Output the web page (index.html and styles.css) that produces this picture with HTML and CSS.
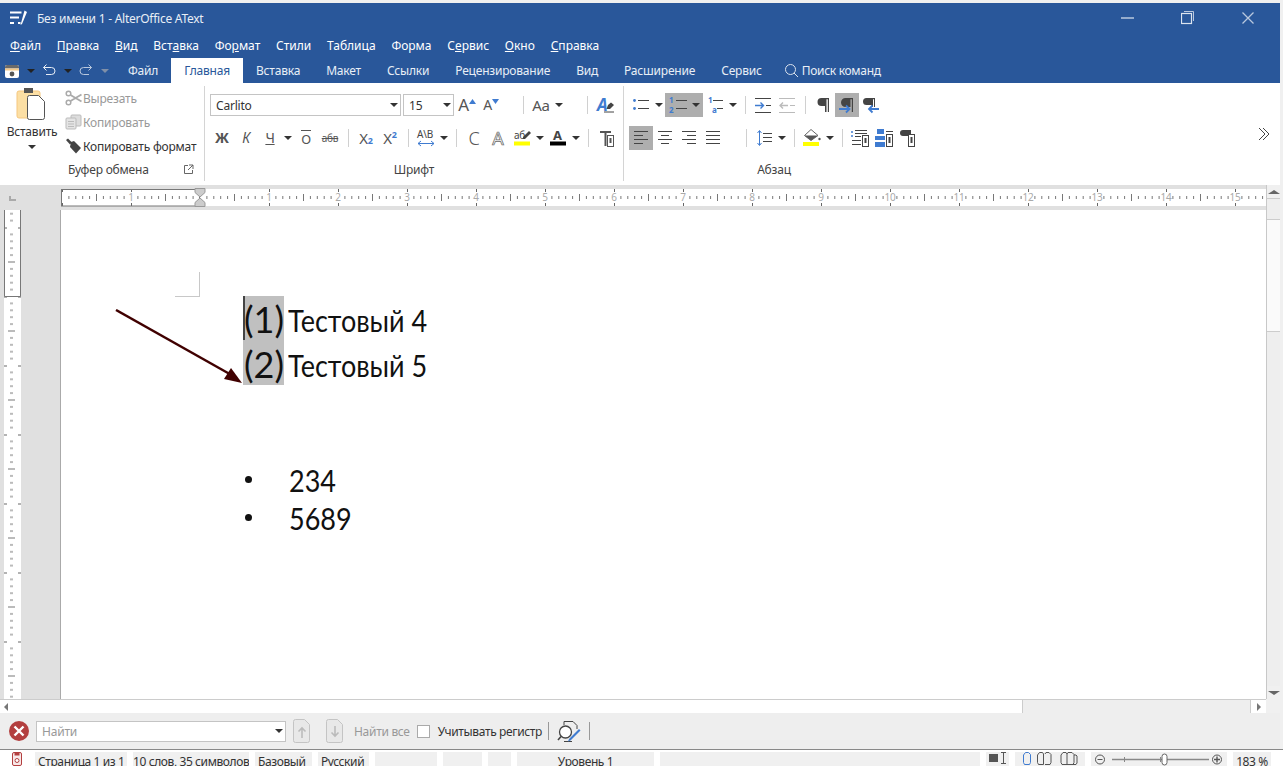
FILE: index.html
```html
<!DOCTYPE html>
<html lang="ru">
	<head>
		<meta charset="UTF-8" />
		<title>Без имени 1 - AlterOffice AText</title>
		<link rel="stylesheet" href="styles.css">
	</head>
	<body>
		<svg class="defs" width="0" height="0">
			<symbol id="i-bullets" viewBox="0 0 24 24"><g fill="#3f7bd0"><circle cx="5.500" cy="7.500" r="1.400"/><circle cx="5.500" cy="15.500" r="1.400"/></g><path d="M9 7.500h11M9 15.500h11" stroke="#444"/></symbol>
			<symbol id="i-indent" viewBox="0 0 24 24"><path d="M4 5.500h16M4 19.500h16M15 12.500h5" stroke="#444"/><path d="M4 12.500h8M9.500 9.500l3 3-3 3" stroke="#3f7bd0" stroke-width="1.400" fill="none"/></symbol>
			<symbol id="i-outdent" viewBox="0 0 24 24"><path d="M4 5.500h16M4 19.500h16M15 12.500h5" stroke="#bbb"/><path d="M13 12.500H5M8 9.500l-3 3 3 3" stroke="#bbb" stroke-width="1.400" fill="none"/></symbol>
			<symbol id="i-para" viewBox="0 0 24 24"><path d="M10.500 5H18v14h-1.200V6.200h-1.300V19H14v-6h-3.500a4 4 0 0 1 0-8z" fill="#444"/></symbol>
			<symbol id="i-para-ltr" viewBox="0 0 24 24"><path d="M10.500 5H18v14h-1.200V6.200h-1.300V14H10.500a4.500 4.500 0 0 1 0-9z" fill="#444"/><path d="M4 16h10M11 12.500l3.500 3.500-3.500 3.500" stroke="#3f7bd0" stroke-width="1.800" fill="none"/></symbol>
			<symbol id="i-para-rtl" viewBox="0 0 24 24"><path d="M7.500 5H16v9h-1V6.200h-1V14h-1.500v-2H7.500a3.500 3.500 0 0 1 0-7z" fill="#444"/><path d="M10 16h10M13.500 12.500L10 16l3.500 3.500" stroke="#3f7bd0" stroke-width="1.800" fill="none"/></symbol>
			<symbol id="i-left" viewBox="0 0 24 24"><path d="M5 5.500h14M5 9.500h9M5 13.500h14M5 17.500h9" stroke="#444"/></symbol>
			<symbol id="i-center" viewBox="0 0 24 24"><path d="M5 5.500h14M8 9.500h8M5 13.500h14M8 17.500h8" stroke="#444"/></symbol>
			<symbol id="i-right" viewBox="0 0 24 24"><path d="M5 5.500h14M10 9.500h9M5 13.500h14M10 17.500h9" stroke="#444"/></symbol>
			<symbol id="i-justify" viewBox="0 0 24 24"><path d="M5 5.500h14M5 9.500h14M5 13.500h14M5 17.500h14" stroke="#444"/></symbol>
			<symbol id="i-spacing" viewBox="0 0 24 24"><path d="M7.500 5v14M5.500 7l2-2.500 2 2.500M5.500 17l2 2.500 2-2.500" stroke="#3f7bd0" fill="none"/><path d="M11 7.500h9M11 11.500h9M11 15.500h9" stroke="#444"/></symbol>
			<symbol id="i-fill" viewBox="0 0 24 24"><path d="M11 3.500l7 6-7 5-6.500-5z" fill="#fff" stroke="#666"/><path d="M4.500 9.500H18l-7 5z" fill="#555"/><circle cx="19.500" cy="13" r="1.200" fill="#555"/><rect x="3" y="16" width="16" height="4" fill="#ffff00"/></symbol>
			<symbol id="i-list-page" viewBox="0 0 24 24"><g fill="#3f7bd0"><circle cx="4" cy="6" r="1"/><circle cx="4" cy="10" r="1"/></g><path d="M7 4.500h12M7 7.500h12M7 10.500h6M4 14.500h9M4 18.500h9" stroke="#444"/><rect x="14.500" y="9.500" width="6" height="11" fill="#fff" stroke="#444"/><rect x="16.500" y="12" width="2" height="5" fill="#444"/></symbol>
			<symbol id="i-block-page" viewBox="0 0 24 24"><g fill="#3f7bd0"><rect x="5" y="3" width="7" height="5"/><rect x="3" y="10" width="10" height="4"/><rect x="3" y="16" width="10" height="5"/></g><path d="M14 5.500h7" stroke="#444"/><rect x="14.500" y="8.500" width="6" height="12" fill="#fff" stroke="#444"/><rect x="16.500" y="11" width="2" height="6" fill="#444"/></symbol>
			<symbol id="i-para-page" viewBox="0 0 24 24"><path d="M7 4h8v7h-1v-1H7a3 3 0 0 1 0-6z" fill="#444"/><rect x="12.500" y="8.500" width="6" height="12" fill="#fff" stroke="#444"/><rect x="14.500" y="11" width="2" height="6" fill="#444"/></symbol>
			<symbol id="i-t-page" viewBox="0 0 24 24"><path d="M6 5h11v2h-4.500v13h-2V7H6z" fill="#555"/><rect x="13.500" y="9.500" width="6" height="11" fill="#fff" stroke="#555"/><rect x="15.500" y="12" width="2" height="5" fill="#555"/></symbol>
			<symbol id="i-doc" viewBox="0 0 18 26"><path d="M2.500 1.500h9l5 5v16a2 2 0 0 1-2 2h-12a2 2 0 0 1-2-2v-19a2 2 0 0 1 2-2z" fill="#e8e8e8" stroke="#c4c4c4"/></symbol>
		</svg>

		<div class="app">
			<header class="head">
				<div class="titlebar">
					<svg class="logo" width="18" height="18" viewBox="0 0 18 18"><path d="M0 3.500h11.500M0 8.500h9M0 14h4M8 14h2.500" stroke="#fff" stroke-width="2.200"/><path d="M14.500 1.500L17 3l-5 12-1.500 1z" fill="#fff"/></svg>
					<div class="title">Без имени 1 - AlterOffice AText</div>
					<div class="winbtns">
						<svg width="60" height="14" viewBox="0 0 60 14"><path d="M0 7h13" stroke="#b9c8de" stroke-width="1.500"/></svg>
						<svg width="61" height="14" viewBox="0 0 61 14"><rect x="0.500" y="2.500" width="10" height="10" fill="none" stroke="#dbe3ee" stroke-width="1.200"/><path d="M3 0.500h9.500v9.500" fill="none" stroke="#b9c8de"/></svg>
						<svg width="12" height="12" viewBox="0 0 12 12"><path d="M0.500 0.500l11 11M11.500 0.500l-11 11" stroke="#b9c8de" stroke-width="1.300"/></svg>
					</div>
				</div>
				<nav class="menu">
					<span><u>Ф</u>айл</span><span><u>П</u>равка</span><span><u>В</u>ид</span><span>Вст<u>а</u>вка</span><span>Фо<u>р</u>мат</span><span>Стили</span><span>Таблица</span><span>Форма</span><span>С<u>е</u>рвис</span><span><u>О</u>кно</span><span><u>С</u>правка</span>
				</nav>
				<div class="tabrow">
					<div class="qat">
						<svg width="16" height="16" viewBox="0 0 16 16"><rect x="1" y="2" width="14" height="13" rx="2" fill="#fff"/><path d="M1 5.500V4a2 2 0 0 1 2-2h10a2 2 0 0 1 2 2v1.500z" fill="#6a6a6a"/><rect x="1" y="5.500" width="14" height="2" fill="#f4c98a"/><circle cx="8" cy="11" r="2.400" fill="#555"/></svg>
						<i class="caret dark"></i>
						<svg width="16" height="16" viewBox="0 0 16 16"><path d="M2.500 4.500h8a3.500 3.500 0 0 1 0 7H5M5.500 1.500L2.500 4.500l3 3" fill="none" stroke="#e8eef6"/></svg>
						<i class="caret dark"></i>
						<svg width="16" height="16" viewBox="0 0 16 16"><path d="M13.500 4.500h-8a3.500 3.500 0 0 0 0 7H11M10.500 1.500l3 3-3 3" fill="none" stroke="#b9c8de"/></svg>
						<i class="caret dim"></i>
					</div>
					<div class="tab">Файл</div>
					<div class="tab active">Главная</div>
					<div class="tab">Вставка</div>
					<div class="tab">Макет</div>
					<div class="tab">Ссылки</div>
					<div class="tab">Рецензирование</div>
					<div class="tab">Вид</div>
					<div class="tab">Расширение</div>
					<div class="tab">Сервис</div>
					<div class="search">
						<svg width="15" height="15" viewBox="0 0 15 15"><circle cx="6.500" cy="6.500" r="5" fill="none" stroke="#dbe3ee"/><path d="M10 10l4 4" stroke="#dbe3ee"/></svg>
						<span>Поиск команд</span>
					</div>
				</div>
			</header>

			<section class="ribbon">
				<div class="group clipboard">
					<div class="clip-body">
						<div class="paste">
							<svg width="32" height="34" viewBox="0 0 32 34"><rect x="1" y="3" width="23" height="27" rx="2" fill="#fcdfa4" stroke="#f5c77e"/><rect x="8" y="0" width="9" height="5" fill="#555"/><path d="M13.500 7.500h9l6 6v16a2 2 0 0 1-2 2h-13a2 2 0 0 1-2-2v-20a2 2 0 0 1 2-2z" fill="#fff" stroke="#555"/></svg>
							<span>Вставить</span>
							<i class="caret"></i>
						</div>
						<div class="clip-list">
							<div class="clip-row muted"><svg width="17" height="16" viewBox="0 0 17 16"><circle cx="3.500" cy="3.500" r="2.300" fill="none" stroke="#aaa" stroke-width="1.500"/><circle cx="3.500" cy="12.500" r="2.300" fill="none" stroke="#aaa" stroke-width="1.500"/><path d="M5.500 5l11 6.500M5.500 11l11-6.500" stroke="#aaa" stroke-width="1.800"/></svg>Вырезать</div>
							<div class="clip-row muted"><svg width="17" height="16" viewBox="0 0 17 16"><rect x="6" y="1" width="10" height="11" rx="1" fill="#ddd" stroke="#bbb"/><rect x="1" y="4" width="10" height="11" rx="1" fill="#e4e4e4" stroke="#bbb"/><path d="M3 7.500h6M3 10h6M3 12.500h6" stroke="#bbb"/></svg>Копировать</div>
							<div class="clip-row"><svg width="17" height="16" viewBox="0 0 17 16"><path d="M1 2l2-1.500 4 4-2 2z" fill="#444"/><path d="M6 4l3-1 7 7-5 5.500-6-6.500z" fill="#444"/></svg>Копировать формат</div>
						</div>
					</div>
					<div class="group-label clip-label">
						<span>Буфер обмена</span>
						<svg width="11" height="11" viewBox="0 0 11 11"><path d="M5 1.500H1.500v8h8V6M6 1h4v4M10 1L5 6" fill="none" stroke="#666"/></svg>
					</div>
				</div>

				<div class="group font">
					<div class="rows">
						<div class="row">
							<div class="combo name">Carlito<i class="caret"></i></div>
							<div class="combo size">15<i class="caret"></i></div>
							<div class="tool glyph big">A<svg class="corner" width="7" height="5" viewBox="0 0 7 5"><path d="M3.500 0L7 5H0z" fill="#3f7bd0"/></svg></div>
							<div class="tool glyph mid">A<svg class="corner" width="7" height="5" viewBox="0 0 7 5"><path d="M3.500 5L7 0H0z" fill="#3f7bd0"/></svg></div>
							<div class="space-14"></div><i class="sep"></i>
							<div class="tool glyph wide">Aa</div><i class="caret"></i>
							<div class="space-16"></div><i class="sep"></i>
							<div class="tool"><svg width="24" height="24" viewBox="0 0 24 24"><text class="clear-a" x="4" y="18">A</text><path d="M15 12l3-2.500 3 2.500-4 4h-3.500z" fill="#444"/><path d="M11 19h10" stroke="#444"/></svg></div>
						</div>
						<div class="row">
							<div class="tool glyph heavy">Ж</div>
							<div class="tool glyph slant">К</div>
							<div class="tool glyph under">Ч</div><i class="caret"></i>
							<div class="tool glyph"><span class="over">О</span></div>
							<div class="tool glyph strike">абв</div>
							<i class="sep"></i>
							<div class="tool glyph script">X<sub>2</sub></div>
							<div class="tool glyph script">X<sup>2</sup></div>
							<i class="sep"></i>
							<div class="tool"><svg width="24" height="24" viewBox="0 0 24 24"><text class="mini-dark" x="3" y="12">A\B</text><path d="M4 17.500h16M7 15l-3 2.500L7 20M17 15l3 2.500-3 2.500" fill="none" stroke="#3f7bd0"/></svg></div><i class="caret"></i>
							<i class="sep"></i>
							<div class="tool glyph tall">C</div>
							<div class="tool glyph outline">A</div>
							<div class="tool"><svg width="24" height="24" viewBox="0 0 24 24"><text class="mini-dark" x="4" y="13">аб</text><path d="M13 11l6-6 2 2-6 6h-2z" fill="#444"/><rect x="4" y="15.500" width="16" height="4" fill="#ffff00"/></svg></div><i class="caret"></i>
							<div class="tool"><svg width="24" height="24" viewBox="0 0 24 24"><text class="bar-a" x="7" y="14">A</text><rect x="4" y="15.500" width="16" height="4" fill="#000"/></svg></div><i class="caret"></i>
							<i class="sep"></i>
							<div class="tool"><svg width="24" height="24"><use href="#i-t-page"/></svg></div>
						</div>
					</div>
					<div class="group-label">Шрифт</div>
				</div>

				<div class="group para">
					<div class="rows">
						<div class="row">
							<div class="tool"><svg width="24" height="24"><use href="#i-bullets"/></svg></div><i class="caret"></i>
							<div class="split on"><div class="tool"><svg width="24" height="24" viewBox="0 0 24 24"><g class="mini-blue"><text x="4" y="10">1</text><text x="4" y="19.500">2</text></g><path d="M11 7.500h11M11 15.500h11" stroke="#444"/></svg></div><i class="caret wide"></i></div>
							<div class="tool"><svg width="24" height="24" viewBox="0 0 24 24"><g class="mini-blue"><text x="5" y="10">1</text><text x="9" y="19.500">a</text></g><path d="M10 7.500h10M14 15.500h6" stroke="#444"/></svg></div><i class="caret"></i>
							<i class="sep"></i>
							<div class="tool"><svg width="24" height="24"><use href="#i-indent"/></svg></div>
							<div class="tool"><svg width="24" height="24"><use href="#i-outdent"/></svg></div>
							<i class="sep"></i>
							<div class="tool"><svg width="24" height="24"><use href="#i-para"/></svg></div>
							<div class="tool on"><svg width="24" height="24"><use href="#i-para-ltr"/></svg></div>
							<div class="tool"><svg width="24" height="24"><use href="#i-para-rtl"/></svg></div>
						</div>
						<div class="row">
							<div class="tool on"><svg width="24" height="24"><use href="#i-left"/></svg></div>
							<div class="tool"><svg width="24" height="24"><use href="#i-center"/></svg></div>
							<div class="tool"><svg width="24" height="24"><use href="#i-right"/></svg></div>
							<div class="tool"><svg width="24" height="24"><use href="#i-justify"/></svg></div>
							<div class="space-15"></div><i class="sep"></i>
							<div class="tool"><svg width="24" height="24"><use href="#i-spacing"/></svg></div><i class="caret"></i>
							<i class="sep"></i>
							<div class="tool"><svg width="24" height="24"><use href="#i-fill"/></svg></div><i class="caret"></i>
							<i class="sep"></i>
							<div class="tool"><svg width="24" height="24"><use href="#i-list-page"/></svg></div>
							<div class="tool"><svg width="24" height="24"><use href="#i-block-page"/></svg></div>
							<div class="tool"><svg width="24" height="24"><use href="#i-para-page"/></svg></div>
						</div>
					</div>
					<div class="group-label">Абзац</div>
				</div>

				<svg class="more" width="12" height="14" viewBox="0 0 12 14"><path d="M1 1l6 6-6 6M5 1l6 6-6 6" fill="none" stroke="#444"/></svg>
			</section>

			<main class="workspace">
				<div class="editor">
					<div class="ruler-band">
						<div class="ruler-corner"><i></i></div>
						<svg class="hruler" width="1205" height="25" viewBox="0 0 1205 25">
							<defs>
								<pattern id="hticks" x="139" y="0" width="69" height="25" patternUnits="userSpaceOnUse">
									<path d="M6.900 11v3M13.800 11v3M20.700 11v3M27.600 11v3M34.500 9v7M41.400 11v3M48.300 11v3M55.200 11v3M62.100 11v3" stroke="#777"/>
									<path d="M0.500 4v3M0.500 18v3" stroke="#666"/>
								</pattern>
							</defs>
							<rect x="0" y="4" width="1205" height="17" fill="#fff"/>
							<rect width="1205" height="25" fill="url(#hticks)"/>
							<rect x="0.500" y="4.500" width="138" height="16.500" fill="none" stroke="#777"/>
							<g class="rule-num">
								<text x="70" y="16">1</text><text x="208" y="16">1</text><text x="277" y="16">2</text><text x="346" y="16">3</text><text x="415" y="16">4</text><text x="484" y="16">5</text><text x="553" y="16">6</text><text x="622" y="16">7</text><text x="691" y="16">8</text><text x="760" y="16">9</text><text x="829" y="16">10</text><text x="898" y="16">11</text><text x="967" y="16">12</text><text x="1036" y="16">13</text><text x="1105" y="16">14</text><text x="1174" y="16">15</text>
							</g>
							<path d="M134 3.500h10v4l-5 4.500-5-4.500zM134 21.500h10v-4l-5-4.500-5 4.500z" fill="#ccc" stroke="#999"/>
						</svg>
					</div>
					<div class="doc-area">
						<svg class="vruler" width="61" height="489" viewBox="0 0 61 489">
							<defs>
								<pattern id="vticks" x="0" y="17.500" width="61" height="69" patternUnits="userSpaceOnUse">
									<path d="M10 6.900h3M10 13.800h3M10 20.700h3M10 27.600h3M8 34.500h7M10 41.400h3M10 48.300h3M10 55.200h3M10 62.100h3" stroke="#777"/>
									<path d="M4 0.500h3M18 0.500h3" stroke="#666"/>
								</pattern>
							</defs>
							<rect width="61" height="489" fill="#e0e0e0"/>
							<rect x="4" width="17" height="489" fill="#fff"/>
							<rect x="4" width="17" height="489" fill="url(#vticks)"/>
							<path d="M4.500 0v86.500h16V0" fill="none" stroke="#777"/>
							<path d="M60.500 0v489" stroke="#aaa"/>
						</svg>
						<div class="page">
							<div class="margin-mark"></div>
							<div class="doc">
								<div class="num-line first"><span class="num"><b>(1)</b></span><span class="narrow">Тестовый 4</span></div>
								<div class="num-line"><span class="num"><b>(2)</b></span><span class="narrow">Тестовый 5</span></div>
								<ul class="bullets">
									<li><span class="narrow">234</span></li>
									<li><span class="narrow">5689</span></li>
								</ul>
							</div>
							<svg class="arrow" width="132" height="80" viewBox="0 0 132 80"><path d="M1 1L120 68" stroke="#400000" stroke-width="2.500"/><path d="M127 74L109 70l7-11z" fill="#400000"/></svg>
						</div>
					</div>
					<div class="hscroll">
						<div class="arr"><i class="tri-left"></i></div>
						<div class="htrack"></div>
						<div class="hrest"></div>
						<div class="arr end"><i class="tri-right"></i></div>
					</div>
				</div>
				<div class="vscroll">
					<div class="arr"><i class="tri-up"></i></div>
					<div class="vthumb"></div>
					<div class="vtrack"></div>
					<div class="vrest"></div>
					<div class="arr"><i class="tri-down"></i></div>
				</div>
			</main>

			<div class="findbar">
				<svg class="close" width="20" height="20" viewBox="0 0 20 20"><circle cx="10" cy="10" r="10" fill="#b33f3f"/><path d="M5.500 5.500l9 9M14.500 5.500l-9 9" stroke="#fff" stroke-width="2.400"/></svg>
				<div class="find-input">Найти<i class="caret"></i></div>
				<svg class="find-up" width="18" height="26"><use href="#i-doc"/><path d="M9 20V10M5.500 13.500L9 10l3.500 3.500" fill="none" stroke="#bbb" stroke-width="1.600"/></svg>
				<svg class="find-down" width="18" height="26"><use href="#i-doc"/><path d="M9 8v10M5.500 14.500L9 18l3.500-3.500" fill="none" stroke="#bbb" stroke-width="1.600"/></svg>
				<span class="find-all">Найти все</span>
				<i class="check"></i>
				<span class="find-case">Учитывать регистр</span>
				<i class="fsep"></i>
				<svg class="find-opts" width="24" height="24" viewBox="0 0 24 24"><path d="M7 6V2.500h9l4 4V10M7 22.500h8" fill="none" stroke="#444"/><circle cx="8.500" cy="13" r="6" fill="#fff" stroke="#444" stroke-width="1.300"/><path d="M4 17.500L1 21" stroke="#444" stroke-width="1.600"/><path d="M12 20l10-10 1.500 1.500-10 10-2.500 1z" fill="#3f7bd0"/></svg>
				<i class="fsep"></i>
			</div>

			<footer class="status">
				<div class="st-icon"><svg width="10" height="14" viewBox="0 0 10 14"><rect x="0.500" y="0.500" width="9" height="13" rx="1.500" fill="#f8e8e8" stroke="#b33f3f"/><rect x="2.500" y="0.500" width="5" height="3" fill="#b33f3f"/><circle cx="5" cy="8.500" r="2" fill="#fff" stroke="#b33f3f"/></svg></div>
				<div class="cell">Страница 1 из 1</div>
				<div class="cell flush">10 слов, 35 символов</div>
				<div class="cell">Базовый</div>
				<div class="cell">Русский</div>
				<div class="cell"></div>
				<div class="cell"></div>
				<div class="cell"></div>
				<div class="cell mid">Уровень 1</div>
				<div class="cell"></div>
				<div class="cell icons"><svg width="18" height="12" viewBox="0 0 18 12"><rect y="2" width="9" height="8" fill="#555"/><path d="M12 0.500h5M14.500 0.500v11M12 11.500h5" stroke="#555"/></svg></div>
				<div class="cell icons"><svg width="56" height="13" viewBox="0 0 56 13"><path d="M1.500 3l2-2.500h3l2 2v8l-1 2h-5l-1-2z" fill="none" stroke="#3f7bd0"/><path d="M15.500 3l2-2.500h3l1 1.500v10.500h-5l-1-2zM23 2l1-1.500h3l2 2v8l-1 2h-5" fill="none" stroke="#555"/><path d="M39 3l2-2.500h3l1 1.500v10.500h-5l-1-2zM45 2l1-1.500h4l2 2v8l-1 2h-6M52 3h2l1 1v7l-1 1.500h-3" fill="none" stroke="#555"/></svg></div>
				<div class="cell zoom">
					<svg width="128" height="13" viewBox="0 0 128 13"><circle cx="5" cy="6.500" r="4.500" fill="none" stroke="#555"/><path d="M2.500 6.500h5" stroke="#555"/><path d="M17 6.500h97" stroke="#888" stroke-width="1.500"/><path d="M29.500 4v5M65.500 4v5" stroke="#888"/><rect x="67" y="1" width="5" height="11" rx="2.500" fill="#fff" stroke="#666"/><circle cx="122" cy="6.500" r="4.500" fill="none" stroke="#555"/><path d="M119 6.500h6M122 3.500v6" stroke="#555" stroke-width="1.400"/></svg>
				</div>
				<div class="cell mid">183 %</div>
			</footer>
		</div>
	</body>
</html>
```

FILE: styles.css
```css
* {
	box-sizing: border-box;
}
html,
body {
	margin: 0;
	height: 100%;
	overflow: hidden;
}
body {
	background: #f0f0f0;
	font-family: "Noto Sans", sans-serif;
	font-size: 12px;
	letter-spacing: -0.2px;
	color: #444;
}
.defs {
	display: block;
	height: 0;
}
.mini-blue text {
	font: bold 8px "Noto Sans", sans-serif;
	fill: #3f7bd0;
}
.mini-dark {
	font: 10px "Noto Sans", sans-serif;
	fill: #444;
}
.clear-a {
	font: italic bold 17px "Noto Sans", sans-serif;
	fill: #3f7bd0;
}
.bar-a {
	font: bold 13px "Noto Sans", sans-serif;
	fill: #444;
}
.rule-num text {
	font: 10px "Noto Sans", sans-serif;
	fill: #aaa;
	text-anchor: middle;
}

.app {
	width: 1283px;
	height: 766px;
	padding: 3px 3px 0 0;
	display: flex;
	flex-direction: column;
	overflow: hidden;
}

/* blue header */
.head {
	background: #29579a;
	height: 80px;
	color: #fff;
	flex: none;
}
.titlebar {
	height: 30px;
	display: flex;
	align-items: center;
	padding-left: 10px;
}
.logo {
	margin-right: 9px;
}
.title {
	color: #e8eef6;
	letter-spacing: -0.25px;
}
.winbtns {
	margin-left: auto;
	margin-right: 26px;
	display: flex;
	align-items: center;
}
.menu {
	height: 25px;
	display: flex;
	gap: 15.8px;
	padding: 0 0 0 10px;
	align-items: center;
	letter-spacing: 0;
}
.tabrow {
	height: 25px;
	display: flex;
	align-items: stretch;
}
.qat {
	width: 115px;
	display: flex;
	align-items: center;
	padding-left: 4px;
}
.qat .caret {
	width: 21px;
}
.tab {
	padding: 0 13px;
	display: flex;
	align-items: center;
	color: #e8eef6;
}
.tab.active {
	background: #fff;
	color: #29579a;
}
.search {
	margin-left: 9px;
	display: flex;
	align-items: center;
	gap: 3px;
	color: #e8eef6;
	letter-spacing: -0.3px;
}

/* carets and separators */
.caret {
	display: flex;
	width: 12px;
	height: 12px;
	flex: none;
	align-items: center;
	justify-content: center;
}
.caret::after {
	content: "";
	border-top: 4px solid #333;
	border-left: 4px solid transparent;
	border-right: 4px solid transparent;
}
.caret.wide {
	width: 14px;
}
.caret.dark::after {
	border-top-color: #222;
}
.caret.dim::after {
	border-top-color: #7f8fa8;
}
.sep {
	width: 12px;
	height: 18px;
	flex: none;
	background: linear-gradient(#d0d0d0, #d0d0d0) center / 1px 100% no-repeat;
}
.space-14 {
	width: 14px;
}
.space-15 {
	width: 15px;
}
.space-16 {
	width: 16px;
}

/* ribbon */
.ribbon {
	height: 102px;
	flex: none;
	background: #fff;
	display: flex;
	position: relative;
}
.group {
	margin-top: 3px;
	height: 95px;
	border-right: 1px solid #d4d4d4;
	display: flex;
	flex-direction: column;
}
.group-label {
	margin-top: auto;
	margin-left: -5px;
	height: 22px;
	padding-bottom: 2px;
	display: flex;
	align-items: center;
	justify-content: center;
}
.clipboard {
	width: 205px;
}
.clip-body {
	display: flex;
	padding-left: 4px;
}
.paste {
	width: 56px;
	display: flex;
	flex-direction: column;
	align-items: center;
	padding-top: 2px;
}
.paste span {
	margin-top: 1px;
	line-height: 18px;
	color: #333;
}
.clip-list {
	margin-left: 5px;
}
.clip-row {
	height: 24px;
	display: flex;
	align-items: center;
	gap: 1px;
	white-space: nowrap;
	color: #333;
}
.clip-row.muted {
	color: #999;
}
.clip-label {
	margin-left: 0;
	justify-content: space-between;
	padding: 0 10px 2px 68px;
}
.font {
	width: 419px;
	padding-left: 5px;
}
.para {
	width: 300px;
	padding-left: 5px;
	border-right: none;
}
.rows {
	padding-top: 7px;
	display: flex;
	flex-direction: column;
	gap: 9px;
}
.row {
	display: flex;
	height: 24px;
	align-items: center;
}
.combo {
	height: 22px;
	border: 1px solid #c4c4c4;
	display: flex;
	align-items: center;
	justify-content: space-between;
	padding-left: 5px;
	color: #333;
}
.combo.name {
	width: 191px;
	margin-right: 2px;
}
.combo.size {
	width: 51px;
	margin-right: 1px;
}
.tool {
	width: 24px;
	height: 24px;
	flex: none;
	display: flex;
	align-items: center;
	justify-content: center;
	position: relative;
}
.tool svg {
	display: block;
}
.tool.on,
.split.on {
	background: #aeaeae;
}
.split {
	display: flex;
	align-items: center;
	height: 24px;
}
.glyph {
	font-size: 14px;
	line-height: 24px;
	color: #555;
}
.glyph.script {
	font-size: 15px;
}
.glyph sub,
.glyph sup {
	font-size: 9px;
	line-height: 0;
	color: #3f7bd0;
	font-weight: bold;
}
.glyph sub {
	align-self: flex-end;
	margin-bottom: 9px;
}
.glyph sup {
	align-self: flex-start;
	margin-top: 9px;
}
.glyph.big {
	font-size: 17px;
}
.glyph.mid {
	font-size: 14px;
}
.glyph.wide {
	font-size: 15px;
}
.glyph.tall {
	font-size: 18px;
	font-weight: 300;
}
.glyph .corner {
	align-self: flex-start;
	margin-top: 6px;
	margin-left: 0;
}
.glyph.heavy {
	font-weight: bold;
}
.glyph.slant {
	font-style: italic;
}
.glyph.under {
	text-decoration: underline;
}
.glyph .over {
	font-size: 13px;
	line-height: 14px;
	padding-top: 1px;
	border-top: 1px solid #555;
}
.glyph.strike {
	font-size: 10px;
	text-decoration: line-through;
}
.glyph.outline {
	font-size: 18px;
	color: #fff;
	-webkit-text-stroke: 0.7px #666;
}
.more {
	position: absolute;
	right: 10px;
	top: 44px;
}

/* editor */
.workspace {
	flex: none;
	height: 528px;
	display: flex;
}
.editor {
	width: 1266px;
	display: flex;
	flex-direction: column;
}
.ruler-band {
	height: 25px;
	flex: none;
	display: flex;
	background: #e0e0e0;
}
.ruler-corner {
	width: 61px;
	padding: 11px 0 0 9px;
}
.ruler-corner i {
	display: block;
	width: 7px;
	height: 5px;
	border-left: 2px solid #aaa;
	border-bottom: 2px solid #aaa;
}
.hruler,
.vruler {
	display: block;
	flex: none;
}
.doc-area {
	height: 489px;
	flex: none;
	display: flex;
}
.page {
	flex: 1;
	background: #fff;
	padding: 62px 0 0 114px;
	position: relative;
}
.margin-mark {
	width: 25px;
	height: 25px;
	border-right: 1px solid #c8c8c8;
	border-bottom: 1px solid #c8c8c8;
}
.doc {
	margin-left: 68px;
	margin-top: -1px;
	font-family: Lato, "Liberation Sans", sans-serif;
	font-size: 30px;
	letter-spacing: 0;
	color: #111;
}
.narrow {
	display: inline-block;
	transform: scaleX(0.9);
	transform-origin: 0 50%;
}
.num-line {
	display: flex;
	height: 44.5px;
	line-height: 48px;
}
.num {
	width: 41px;
	background: #c0c0c0;
	margin-right: 4px;
	position: relative;
}
.num b {
	display: inline-block;
	font-weight: normal;
	font-size: 36px;
	line-height: 46px;
	padding-left: 1px;
}
.first .num::before {
	content: "";
	position: absolute;
	left: 0;
	top: 0;
	width: 2px;
	height: 44px;
	background: #444;
}
.bullets {
	list-style: none;
	margin: 76px 0 0;
	padding: 0;
	line-height: 38px;
}
.bullets li {
	padding-left: 46px;
	position: relative;
}
.bullets li::before {
	content: "";
	position: absolute;
	left: 2px;
	top: 15px;
	width: 7px;
	height: 7px;
	border-radius: 50%;
	background: #111;
}
.arrow {
	position: absolute;
	left: 54px;
	top: 99px;
}
.hscroll {
	height: 14px;
	flex: none;
	display: flex;
	border-top: 1px solid #ccc;
	background: #fff;
}
.arr {
	display: flex;
	align-items: center;
	justify-content: center;
	flex: none;
}
.hscroll .arr {
	width: 11px;
}
.hscroll .arr.end {
	width: 16px;
	border-left: 1px solid #ccc;
	background: #fff;
}
.htrack {
	width: 1011px;
	background: #fff;
}
.hrest {
	flex: 1;
	background: #eee;
	border-left: 1px solid #ccc;
}
.tri-left {
	border-right: 4px solid #777;
	border-top: 4px solid transparent;
	border-bottom: 4px solid transparent;
}
.tri-right {
	border-left: 4px solid #777;
	border-top: 4px solid transparent;
	border-bottom: 4px solid transparent;
}
.tri-up {
	border-bottom: 4px solid #666;
	border-left: 6px solid transparent;
	border-right: 6px solid transparent;
}
.tri-down {
	border-top: 4px solid #666;
	border-left: 6px solid transparent;
	border-right: 6px solid transparent;
}
.vscroll {
	width: 14px;
	height: 514px;
	flex: none;
	display: flex;
	flex-direction: column;
	border-left: 1px solid #c8c8c8;
	background: #f0f0f0;
}
.vscroll .arr {
	height: 13px;
}
.vthumb {
	height: 22px;
	background: #eee;
	border-top: 1px solid #ccc;
	border-bottom: 1px solid #ccc;
}
.vtrack {
	height: 111px;
	background: #fafafa;
}
.vrest {
	flex: 1;
	background: #eee;
	border-top: 1px solid #ccc;
}

/* find bar */
.findbar {
	height: 36px;
	flex: none;
	background: #eee;
	display: flex;
	align-items: center;
	padding-left: 9px;
}
.find-input {
	margin-left: 7px;
	width: 250px;
	height: 21px;
	background: #fff;
	border: 1px solid #c4c4c4;
	display: flex;
	align-items: center;
	justify-content: space-between;
	padding-left: 5px;
	color: #999;
}
.find-up {
	margin-left: 7px;
}
.find-down {
	margin-left: 15px;
}
.find-all {
	margin-left: 10px;
	color: #999;
	letter-spacing: -0.3px;
}
.check {
	margin-left: 7px;
	width: 13px;
	height: 13px;
	background: #fff;
	border: 1px solid #aaa;
}
.find-case {
	margin-left: 8px;
	color: #333;
	letter-spacing: -0.35px;
}
.fsep {
	width: 1px;
	height: 18px;
	background: #999;
	margin-left: 6px;
}
.find-opts {
	margin-left: 8px;
	margin-right: 2px;
}

/* status bar */
.status {
	flex: 1;
	min-height: 0;
	margin-right: -3px;
	background: #fff;
	border-top: 1px solid #888;
	padding-top: 2px;
	display: grid;
	grid-template-columns: 29px 92px 116px 57px 51px 62px 39px 23px 137px 320px 23px 70px 136px 38px;
	column-gap: 6px;
	overflow: hidden;
}
.st-icon {
	padding: 0 0 0 12px;
}
.cell {
	background: #f0f0f0;
	height: 14px;
	padding-left: 3px;
	line-height: 19px;
	letter-spacing: -0.4px;
	white-space: nowrap;
	overflow: hidden;
	color: #333;
}
.cell.flush {
	padding-left: 0;
}
.cell.mid {
	text-align: center;
	padding-left: 0;
}
.cell.icons {
	display: flex;
	justify-content: center;
	padding-left: 0;
}
.cell.zoom {
	padding-left: 4px;
}
```
